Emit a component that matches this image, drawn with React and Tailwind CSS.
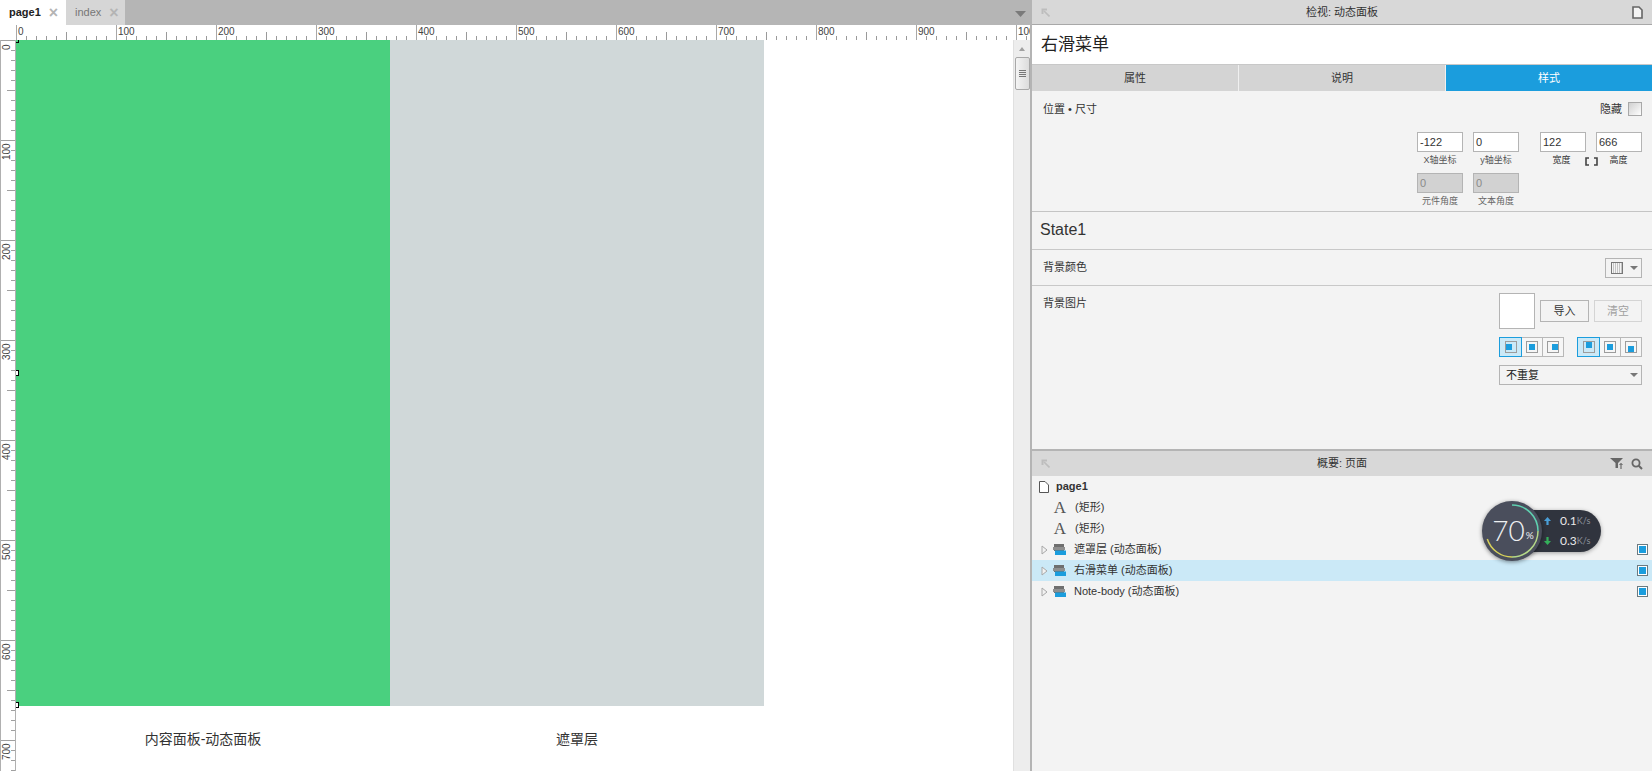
import React from "react";

const FONT = '"Liberation Sans","Noto Sans CJK SC",sans-serif';

function TopRuler() {
  const ticks = [];
  for (let v = 0; v <= 1010; v += 10) {
    const x = 16.5 + v;
    const h = v % 100 === 0 ? 15 : v % 50 === 0 ? 8 : 4;
    ticks.push(<line key={v} x1={x} x2={x} y1={15} y2={15 - h} stroke={v % 100 === 0 ? "#a8a8a8" : "#9a9a9a"} />);
  }
  const labels = [];
  for (let v = 0; v <= 1000; v += 100) {
    labels.push(
      <text key={v} x={18 + v} y={9.5} fontSize="10" fill="#444" fontFamily="Liberation Sans">
        {v}
      </text>
    );
  }
  return (
    <svg width="1030" height="15" className="block shrink-0 bg-white">
      {ticks}
      {labels}
    </svg>
  );
}

function LeftRuler() {
  const ticks = [];
  for (let v = 0; v <= 730; v += 10) {
    const y = 0.5 + v;
    const w = v % 100 === 0 ? 15 : v % 50 === 0 ? 8 : 4;
    ticks.push(<line key={v} x1={15} x2={15 - w} y1={y} y2={y} stroke="#a0a0a0" />);
  }
  const labels = [];
  for (let v = 0; v <= 700; v += 100) {
    const y = v === 0 ? 10 : 20 + v;
    labels.push(
      <text key={v} x={0} y={0} transform={`translate(9.5 ${y}) rotate(-90)`} fontSize="10" fill="#444" fontFamily="Liberation Sans">
        {v}
      </text>
    );
  }
  return (
    <svg width="16" height="731" className="block shrink-0 bg-white">
      {ticks}
      {labels}
      <line x1="15.5" x2="15.5" y1="0" y2="731" stroke="#b0b0b0" />
      <line x1="0.5" x2="0.5" y1="0" y2="731" stroke="#b0b0b0" />
    </svg>
  );
}

function Canvas() {
  return (
    <div className="relative flex-1 bg-white overflow-hidden">
      <div className="flex">
        <div className="w-[374px] h-[666px] bg-[#4ad07f]" />
        <div className="w-[374px] h-[666px] bg-[#d0d8d9]" />
      </div>
      <div className="flex mt-[24px] text-[14px] leading-[18px] text-[#333]">
        <div className="w-[374px] text-center">内容面板-动态面板</div>
        <div className="w-[374px] text-center">遮罩层</div>
      </div>
      <div className="absolute left-0 top-0 w-[3px] h-[3px] border-r border-b border-black" />
      <div className="absolute left-0 top-[330px] w-[3px] h-[6px] border-t border-r border-b border-black bg-white" />
      <div className="absolute left-0 top-[662px] w-[3px] h-[6px] border-t border-r border-b border-black bg-white" />
    </div>
  );
}

function Scrollbar() {
  return (
    <div className="w-[17px] shrink-0 bg-[#ededed] border-l border-[#e0e0e0] flex flex-col items-center">
      <svg width="8" height="6" className="mt-[6px]">
        <path d="M4 1 L7 5 L1 5 Z" fill="#a0a0a0" />
      </svg>
      <div className="mt-[5px] w-[15px] h-[33px] rounded-[2px] border border-[#a8a8a8] bg-gradient-to-r from-[#f4f4f4] to-[#dcdcdc] flex flex-col items-center justify-center gap-[1px]">
        <div className="w-[7px] h-[1px] bg-[#777]" />
        <div className="w-[7px] h-[1px] bg-[#777]" />
        <div className="w-[7px] h-[1px] bg-[#777]" />
        <div className="w-[7px] h-[1px] bg-[#777]" />
      </div>
    </div>
  );
}

function LeftPane() {
  return (
    <div className="w-[1030px] shrink-0 flex flex-col h-full">
      <div className="h-[25px] bg-[#b5b5b5] flex items-stretch shrink-0 relative">
        <div className="w-[66px] bg-white flex items-center pl-[9px] gap-[8px]">
          <span className="text-[11px] font-bold text-[#222]">page1</span>
          <span className="text-[16px] leading-none text-[#b4b4b4] font-bold">×</span>
        </div>
        <div className="w-[59px] bg-[#d6d6d6] flex items-center pl-[9px] gap-[8px]">
          <span className="text-[11px] text-[#777]">index</span>
          <span className="text-[16px] leading-none text-[#b4b4b4] font-bold">×</span>
        </div>
        <div className="flex-1" />
        <div className="flex items-center pr-[4px] pt-[3px]">
          <svg width="11" height="6">
            <path d="M0 0 H11 L5.5 6 Z" fill="#7a7a7a" />
          </svg>
        </div>
      </div>
      <TopRuler />
      <div className="flex flex-1 min-h-0 overflow-hidden">
        <LeftRuler />
        <Canvas />
        <Scrollbar />
      </div>
    </div>
  );
}

function PinIcon() {
  return (
    <svg width="9" height="9" viewBox="0 0 9 9" className="block">
      <path d="M0.5 0.5 H6 V2.5 H2.5 V6 H0.5 Z" fill="#bdbdbd" />
      <path d="M3 3 L8.5 8.5" stroke="#bdbdbd" strokeWidth="1.6" />
    </svg>
  );
}

function TitleBar({ title, right, className = "" }) {
  return (
    <div className={`h-[25px] bg-[#d8d8d8] grid grid-cols-[1fr_auto_1fr] items-center px-[9px] shrink-0 ${className}`}>
      <PinIcon />
      <div className="text-center text-[11px] text-[#333]">{title}</div>
      <div className="flex justify-end">{right}</div>
    </div>
  );
}

function Field({ value, disabled }) {
  return (
    <div
      className={`h-[20px] border border-[#b4b4b4] flex items-center pl-[2px] text-[11px] ${
        disabled ? "bg-[#d2d2d2] text-[#8a8a8a]" : "bg-white text-[#333]"
      }`}
    >
      {value}
    </div>
  );
}

function Cap({ children, className = "" }) {
  return <div className={`text-center text-[9px] leading-[11px] mt-[3px] ${className}`}>{children}</div>;
}

function Align({ selected, fill, wide }) {
  const pos = {
    left: "justify-start items-center",
    center: "justify-center items-center",
    right: "justify-end items-center",
    top: "justify-center items-start",
    bottom: "justify-center items-end",
  }[fill];
  return (
    <div
      className={`h-[20px] ${wide ? "w-[23px]" : "w-[22px]"} flex items-center justify-center border ${
        selected ? "border-[#1b9ddd] bg-[#cbe9f7] z-10" : "border-[#b8b8b8] bg-[#f6f6f6] -ml-[1px]"
      }`}
    >
      <div className={`w-[12px] h-[12px] border border-[#9c9c9c] flex ${pos}`}>
        <div className="w-[6px] h-[6px] bg-[#1b9ddd]" />
      </div>
    </div>
  );
}

function Inspector() {
  return (
    <div className="h-[449px] shrink-0 flex flex-col bg-[#f3f3f3]">
      <TitleBar
        title="检视: 动态面板"
        className="border-b border-[#a8a8a8]"
        right={
          <svg width="11" height="13" viewBox="0 0 11 13">
            <path d="M1 1 H7 L10 4 V12 H1 Z" fill="#f4f4f4" stroke="#666" strokeWidth="1.6" />
          </svg>
        }
      />
      <div className="h-[40px] bg-white flex items-center pl-[9px] pt-[1px] text-[17px] text-[#222] border-b border-[#c8c8c8] shrink-0">
        右滑菜单
      </div>
      <div className="h-[26px] grid grid-cols-3 gap-[1px] bg-[#f0f0f0] text-[11px] shrink-0">
        <div className="bg-[#d4d4d4] flex items-center justify-center text-[#333]">属性</div>
        <div className="bg-[#d4d4d4] flex items-center justify-center text-[#333]">说明</div>
        <div className="bg-[#1b9ddd] flex items-center justify-center text-white">样式</div>
      </div>

      <div className="h-[121px] shrink-0 border-b border-[#c4c4c4] flex flex-col px-[11px] pr-[10px]">
        <div className="flex items-center justify-between h-[18px] mt-[9px]">
          <span className="text-[11px] text-[#333]">位置 • 尺寸</span>
          <div className="flex items-center gap-[6px]">
            <span className="text-[11px] text-[#333]">隐藏</span>
            <div className="w-[14px] h-[14px] border border-[#a8a8a8] bg-gradient-to-br from-[#d0d0d0] to-white" />
          </div>
        </div>
        <div className="self-end w-[225px] mt-[14px]">
          <div className="flex">
            <div className="w-[46px]">
              <Field value="-122" />
              <Cap className="text-[#555]">X轴坐标</Cap>
            </div>
            <div className="w-[46px] ml-[10px]">
              <Field value="0" />
              <Cap className="text-[#555]">y轴坐标</Cap>
            </div>
            <div className="w-[46px] ml-[21px]">
              <Field value="122" />
              <Cap className="text-[#333] pr-[3px]">宽度</Cap>
            </div>
            <div className="w-[46px] ml-[10px] relative">
              <Field value="666" />
              <Cap className="text-[#333] pr-[1px]">高度</Cap>
              <svg width="13" height="9" viewBox="0 0 13 9" className="absolute left-[-11px] top-[25px]">
                <path d="M4 1 H1 V8 H4 M9 1 H12 V8 H9" fill="none" stroke="#444" strokeWidth="1.6" />
              </svg>
            </div>
          </div>
          <div className="flex mt-[7px]">
            <div className="w-[46px]">
              <Field value="0" disabled />
              <Cap className="text-[#666]">元件角度</Cap>
            </div>
            <div className="w-[46px] ml-[10px]">
              <Field value="0" disabled />
              <Cap className="text-[#666]">文本角度</Cap>
            </div>
          </div>
        </div>
      </div>

      <div className="h-[38px] shrink-0 border-b border-[#c8c8c8] flex items-center pl-[8px] pb-[2px] text-[16px] text-[#333]">
        State1
      </div>

      <div className="h-[36px] shrink-0 border-b border-[#c8c8c8] flex items-center justify-between pl-[11px] pr-[10px]">
        <span className="text-[11px] text-[#333]">背景颜色</span>
        <div className="w-[37px] h-[20px] border border-[#b4b4b4] flex items-center pl-[5px] gap-[6px]">
          <svg width="12" height="12" viewBox="0 0 12 12">
            <rect x="0.5" y="0.5" width="11" height="11" fill="#f4f4f4" stroke="#777" />
            <path d="M2.5 1 V11 M4.5 1 V11 M6.5 1 V11 M8.5 1 V11 M10.5 1 V11" stroke="#c4c4c4" />
          </svg>
          <svg width="8" height="4" className="ml-[1px]">
            <path d="M0 0 H8 L4 4 Z" fill="#777" />
          </svg>
        </div>
      </div>

      <div className="flex-1 flex justify-between pl-[11px] pr-[10px] pt-[7px]">
        <span className="text-[11px] text-[#333] mt-[2px]">背景图片</span>
        <div className="w-[143px] flex flex-col">
          <div className="flex items-center">
            <div className="w-[36px] h-[36px] bg-white border border-[#b4b4b4]" />
            <div className="ml-[5px] w-[49px] h-[22px] border border-[#b4b4b4] flex items-center justify-center text-[11px] text-[#333]">
              导入
            </div>
            <div className="ml-[5px] w-[48px] h-[22px] border border-[#d4d4d4] flex items-center justify-center text-[11px] text-[#a0a0a0]">
              清空
            </div>
          </div>
          <div className="flex justify-between mt-[8px]">
            <div className="flex">
              <Align selected fill="left" wide />
              <Align fill="center" />
              <Align fill="right" />
            </div>
            <div className="flex">
              <Align selected fill="top" wide />
              <Align fill="center" />
              <Align fill="bottom" />
            </div>
          </div>
          <div className="mt-[8px] h-[20px] border border-[#b4b4b4] flex items-center justify-between pl-[6px] pr-[3px] text-[11px] text-[#222]">
            <span>不重复</span>
            <svg width="8" height="4">
              <path d="M0 0 H8 L4 4 Z" fill="#777" />
            </svg>
          </div>
        </div>
      </div>
    </div>
  );
}

function Layers() {
  return (
    <svg width="13" height="11" viewBox="0 0 13 11" className="shrink-0">
      <rect x="1" y="0" width="10" height="7" fill="#6f6f6f" />
      <rect x="0" y="3" width="12" height="3" fill="#8f8f8f" />
      <rect x="2" y="6.5" width="11" height="4.5" fill="#1b9ddd" />
    </svg>
  );
}

function Caret() {
  return (
    <svg width="7" height="10" viewBox="0 0 7 10" className="shrink-0">
      <path d="M1 1 L6 5 L1 9 Z" fill="#f2f2f2" stroke="#a8a8a8" />
    </svg>
  );
}

function Mark() {
  return (
    <div className="w-[11px] h-[11px] border border-[#6b7a80] bg-white flex items-center justify-center shrink-0">
      <div className="w-[7px] h-[7px] bg-[#1b9ddd]" />
    </div>
  );
}

function Row({ children, selected, pl = "pl-[9px]" }) {
  return (
    <div className={`h-[21px] flex items-center ${pl} pr-[4px] ${selected ? "bg-[#cbe9f7]" : ""}`}>{children}</div>
  );
}

function GlyphA() {
  return (
    <span className="w-[14px] text-center text-[17px] leading-none text-[#555]" style={{ fontFamily: '"Liberation Serif",serif' }}>
      A
    </span>
  );
}

function Speed() {
  return (
    <div className="absolute left-[450px] top-[50px] w-[120px] h-[60px]">
      <div
        className="absolute left-[30px] top-[9px] w-[89px] h-[42px] rounded-full bg-[#30343e] shadow-[0_1px_4px_rgba(0,0,0,0.35)] flex flex-col justify-center pl-[48px] text-[12px] text-[#e8e8e8] gap-[4px]"
        style={{ fontFamily: '"Lato",sans-serif' }}
      >
        <div className="flex items-center leading-[16px]">
          <svg width="7" height="8" viewBox="0 0 7 8" className="absolute left-[32px]">
            <path d="M3.5 0 L7 4 H4.6 V8 H2.4 V4 H0 Z" fill="#4a9fd8" />
          </svg>
          <span>0.1</span>
          <span className="text-[9px] text-[#8d929c]">K/s</span>
        </div>
        <div className="flex items-center leading-[16px]">
          <svg width="7" height="8" viewBox="0 0 7 8" className="absolute left-[32px]">
            <path d="M3.5 8 L7 4 H4.6 V0 H2.4 V4 H0 Z" fill="#34b05a" />
          </svg>
          <span>0.3</span>
          <span className="text-[9px] text-[#8d929c]">K/s</span>
        </div>
      </div>
      <div className="absolute left-0 top-0 w-[60px] h-[60px] rounded-full bg-[#4a4e5c] shadow-[0_1px_4px_rgba(0,0,0,0.45)]">
        <svg width="60" height="60" viewBox="0 0 60 60" className="absolute inset-0">
          <path d="M30 4 A26 26 0 0 1 56 30" fill="none" stroke="#5fd0b0" strokeWidth="1.5" />
          <path d="M56 30 A26 26 0 0 1 30 56" fill="none" stroke="#b4d888" strokeWidth="1.5" />
          <path d="M30 56 A26 26 0 0 1 5.3 38" fill="none" stroke="#d8d25a" strokeWidth="1.5" />
        </svg>
        <div
          className="absolute inset-0 flex items-center justify-center pb-[3px] pl-[2px] text-[#eef0f2] font-light"
          style={{ fontFamily: '"Lato",sans-serif' }}
        >
          <span className="text-[28px] leading-none">70</span>
          <span className="text-[10px] leading-none mt-[10px] ml-[1px] font-normal">%</span>
        </div>
      </div>
    </div>
  );
}

function Outline() {
  const items = [
    ["遮罩层 (动态面板)", false],
    ["右滑菜单 (动态面板)", true],
    ["Note-body (动态面板)", false],
  ];
  return (
    <div className="flex-1 bg-[#f3f3f3] flex flex-col relative border-t-[2px] border-[#b4b4b4]">
      <TitleBar
        title="概要: 页面"
        right={
          <div className="flex items-center gap-[7px]">
            <svg width="14" height="11" viewBox="0 0 14 11">
              <path d="M0 0 H13 L8 5 V10 L5.5 10 V5 Z" fill="#666" />
              <path d="M11 11 V5.5 M9.5 7 L11 5.5 L12.5 7" stroke="#555" fill="none" />
            </svg>
            <svg width="12" height="12" viewBox="0 0 12 12">
              <circle cx="5" cy="5" r="3.6" fill="none" stroke="#666" strokeWidth="1.8" />
              <path d="M7.8 7.8 L11 11" stroke="#666" strokeWidth="2" />
            </svg>
          </div>
        }
      />
      <div>
        <Row pl="pl-[7px]">
          <svg width="10" height="12" viewBox="0 0 10 12">
            <path d="M0.5 0.5 H6 L9.5 4 V11.5 H0.5 Z" fill="#fff" stroke="#555" />
          </svg>
          <span className="ml-[7px] text-[11px] font-bold text-[#333]">page1</span>
        </Row>
        <Row pl="pl-[21px]">
          <GlyphA />
          <span className="ml-[8px] text-[11px] text-[#333]">(矩形)</span>
        </Row>
        <Row pl="pl-[21px]">
          <GlyphA />
          <span className="ml-[8px] text-[11px] text-[#333]">(矩形)</span>
        </Row>
        {items.map(([t, s]) => (
          <Row key={t} selected={s}>
            <Caret />
            <span className="w-[5px] shrink-0" />
            <Layers />
            <span className="ml-[8px] text-[11px] text-[#333] flex-1 whitespace-nowrap">{t}</span>
            <Mark />
          </Row>
        ))}
      </div>
      <Speed />
    </div>
  );
}

export default function App() {
  return (
    <div className="w-[1652px] h-[771px] flex overflow-hidden bg-white" style={{ fontFamily: FONT }}>
      <LeftPane />
      <div className="w-[2px] bg-[#b4b4b4] shrink-0" />
      <div className="flex-1 flex flex-col min-w-0">
        <Inspector />
        <Outline />
      </div>
    </div>
  );
}
